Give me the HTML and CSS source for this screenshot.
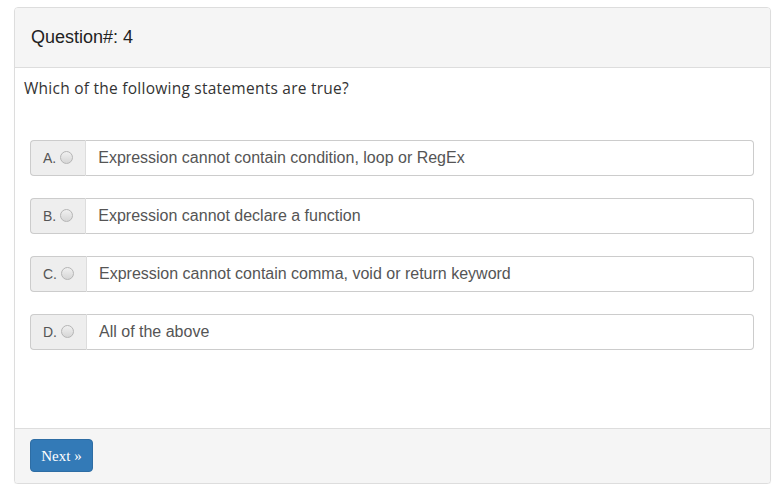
FILE: index.html
```html
<!DOCTYPE html>
<html>
<head>
<meta charset="utf-8">
<link rel="stylesheet" href="styles.css">
</head>
<body>
<div class="page">
  <div class="panel">
    <div class="panel-heading">Question#: 4</div>
    <div class="panel-body">
      <p class="question">Which of the following statements are true?</p>
      <div class="options">
        <div class="input-group">
          <span class="addon">A.<span class="radio"></span></span>
          <div class="field">Expression cannot contain condition, loop or RegEx</div>
        </div>
        <div class="input-group">
          <span class="addon">B.<span class="radio"></span></span>
          <div class="field">Expression cannot declare a function</div>
        </div>
        <div class="input-group">
          <span class="addon">C.<span class="radio"></span></span>
          <div class="field">Expression cannot contain comma, void or return keyword</div>
        </div>
        <div class="input-group">
          <span class="addon">D.<span class="radio"></span></span>
          <div class="field">All of the above</div>
        </div>
      </div>
    </div>
    <div class="panel-footer">
      <button class="btn">Next »</button>
    </div>
  </div>
</div>
</body>
</html>
```
FILE: styles.css
```css
html, body {
  margin: 0;
  padding: 0;
  background: #fff;
}
.page {
  padding: 7px 7px 0 14px;
}
.panel {
  width: 755px;
  border: 1px solid #ddd;
  border-radius: 4px;
  box-shadow: 0 1px 1px rgba(0,0,0,0.05);
  background: #fff;
}
.panel-heading {
  background: #f5f5f5;
  border-bottom: 1px solid #ddd;
  border-radius: 3px 3px 0 0;
  height: 60px;
  box-sizing: border-box;
  padding: 18px 16px 0 16px;
  font-family: "Liberation Sans", Arial, sans-serif;
  font-size: 18px;
  line-height: 22px;
  color: #222;
}
.panel-body {
  padding: 10px 9px 0 9px;
  height: 360px;
  box-sizing: border-box;
}
.question {
  margin: 0;
  font-family: "Open Sans", sans-serif;
  font-size: 15.5px;
  letter-spacing: 0.25px;
  line-height: 20px;
  color: #333;
}
.options {
  padding: 42px 7px 0 6px;
  display: flex;
  flex-direction: column;
  gap: 22px;
}
.input-group {
  display: flex;
  height: 36px;
}
.addon {
  display: flex;
  align-items: center;
  padding: 0 12px;
  background: #eee;
  border: 1px solid #ccc;
  border-right: 1px solid #ddd;
  border-radius: 4px 0 0 4px;
  font-family: "Liberation Sans", Arial, sans-serif;
  font-size: 14px;
  color: #555;
  box-sizing: border-box;
}
.radio {
  display: inline-block;
  width: 13px;
  height: 13px;
  margin-left: 4px;
  margin-top: -2px;
  border: 1px solid #b5b5b5;
  border-radius: 50%;
  background: linear-gradient(#f0f0f0, #d6d6d6);
  box-sizing: border-box;
}
.field {
  flex: 1;
  display: flex;
  align-items: center;
  padding: 0 12px;
  border: 1px solid #ccc;
  border-left: none;
  border-radius: 0 4px 4px 0;
  font-family: "Liberation Sans", Arial, sans-serif;
  font-size: 16px;
  color: #555;
  background: #fff;
}
.panel-footer {
  background: #f5f5f5;
  border-top: 1px solid #ddd;
  border-radius: 0 0 3px 3px;
  padding: 10px 15px 11px 15px;
}
.btn {
  display: block;
  width: 63px;
  height: 33px;
  padding: 1px 0 0 0;
  background: #337ab7;
  border: 1px solid #2e6da4;
  border-radius: 4px;
  color: #fff;
  font-family: "Liberation Serif", "Times New Roman", serif;
  font-size: 15px;
}
```
